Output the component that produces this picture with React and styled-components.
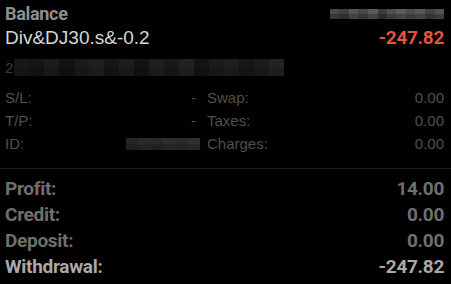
import styled, { createGlobalStyle } from "styled-components";

const GlobalStyle = createGlobalStyle`
  html, body { margin: 0; padding: 0; background: #000; }
  body { font-family: "Liberation Sans", Arial, sans-serif; }
`;

const pixelate = (tones) => {
  const step = 100 / tones.length;
  return tones
    .map((t, i) => `${t} ${(i * step).toFixed(2)}%, ${t} ${((i + 1) * step).toFixed(2)}%`)
    .join(", ");
};

const Redacted = styled.span`
  display: inline-block;
  width: ${(p) => p.$w}px;
  height: ${(p) => p.$h}px;
  background:
    linear-gradient(180deg, rgba(0,0,0,0) 50%, rgba(0,0,0,${(p) => p.$shade || 0.2}) 50%),
    linear-gradient(90deg, ${(p) => pixelate(p.$tones)});
  filter: blur(0.6px);
`;

const Panel = styled.div`
  width: 451px;
  height: 284px;
  padding: 4px 7px 0 5px;
  box-sizing: border-box;
  background: #000;
  overflow: hidden;
`;

const HeadRow = styled.div`
  display: flex;
  align-items: center;
  justify-content: space-between;
  height: 20px;
`;

const Narrow = styled.span`
  font-family: Roboto, "Liberation Sans", Arial, sans-serif;
  font-weight: 700;
  letter-spacing: -0.3px;
`;

const Heading = styled(Narrow)`
  font-size: 18px;
  line-height: 20px;
  color: #8e8e8e;
`;

const SymbolRow = styled.div`
  display: flex;
  align-items: baseline;
  justify-content: space-between;
  margin-top: 2px;
  line-height: 24px;
`;

const Symbol = styled.span`
  font-size: 19px;
  color: #d6d6d6;
`;

const Amount = styled(Narrow)`
  font-size: 19px;
  color: ${(p) => (p.$negative ? "#e4533f" : "#8a8a8a")};
`;

const CommentLine = styled.div`
  display: flex;
  align-items: center;
  gap: 1px;
  margin-top: 9px;
  height: 17px;
`;

const Digit = styled.span`
  font-size: 15px;
  color: #3a3a3a;
`;

const DetailGrid = styled.div`
  display: grid;
  grid-template-columns: 191px 1fr;
  column-gap: 11px;
  margin-top: 10px;
  padding-bottom: 13px;
`;

const DetailCell = styled.div`
  display: flex;
  align-items: center;
  justify-content: space-between;
  height: 23px;
  font-size: 15px;
  line-height: 23px;
  color: #4f4f4f;
`;

const Divider = styled.div`
  height: 1px;
  margin: 0 -7px 0 -5px;
  background: #1c1c1c;
`;

const Totals = styled.div`
  padding-top: 7px;
`;

const TotalRow = styled.div`
  display: flex;
  justify-content: space-between;
  height: 26px;
  line-height: 26px;
  font-family: Roboto, "Liberation Sans", Arial, sans-serif;
  font-weight: 700;
  font-size: 19px;
  letter-spacing: -0.3px;
  color: ${(p) => (p.$strong ? "#a9a9a9" : "#6f6f6f")};
`;

const details = [
  ["S/L:", "-", "Swap:", "0.00"],
  ["T/P:", "-", "Taxes:", "0.00"],
  ["ID:", null, "Charges:", "0.00"],
];

const totals = [
  ["Profit:", "14.00"],
  ["Credit:", "0.00"],
  ["Deposit:", "0.00"],
  ["Withdrawal:", "-247.82", true],
];

export default function App() {
  return (
    <Panel>
      <GlobalStyle />
      <HeadRow>
        <Heading>Balance</Heading>
        <Redacted
          $w={114}
          $h={10}
          $shade={0.25}
          $tones={["#4a4a4a", "#3e3e3e", "#565656", "#484848", "#5a5a5a", "#3c3c3c", "#505050", "#5c5c5c", "#4e4e4e", "#585858", "#444", "#525252"]}
        />
      </HeadRow>
      <SymbolRow>
        <Symbol>Div&amp;DJ30.s&amp;-0.2</Symbol>
        <Amount $negative>-247.82</Amount>
      </SymbolRow>
      <CommentLine>
        <Digit>2</Digit>
        <Redacted
          $w={270}
          $h={17}
          $shade={0.15}
          $tones={["#181818", "#151515", "#1c1c1c", "#121212", "#1a1a1a", "#202020", "#161616", "#1d1d1d", "#131313", "#1f1f1f", "#191919", "#222", "#141414", "#1b1b1b", "#1e1e1e", "#171717", "#1c1c1c", "#232323"]}
        />
      </CommentLine>
      <DetailGrid>
        {details.map(([l1, v1, l2, v2]) => [
          <DetailCell key={l1}>
            <span>{l1}</span>
            {v1 ? (
              <span>{v1}</span>
            ) : (
              <Redacted
                $w={74}
                $h={12}
                $shade={0}
                style={{ marginRight: -4 }}
                $tones={["#262626", "#2b2b2b", "#282828", "#2e2e2e", "#2a2a2a", "#303030"]}
              />
            )}
          </DetailCell>,
          <DetailCell key={l2}>
            <span>{l2}</span>
            <span>{v2}</span>
          </DetailCell>,
        ])}
      </DetailGrid>
      <Divider />
      <Totals>
        {totals.map(([label, value, strong]) => (
          <TotalRow key={label} $strong={strong}>
            <span>{label}</span>
            <span>{value}</span>
          </TotalRow>
        ))}
      </Totals>
    </Panel>
  );
}
